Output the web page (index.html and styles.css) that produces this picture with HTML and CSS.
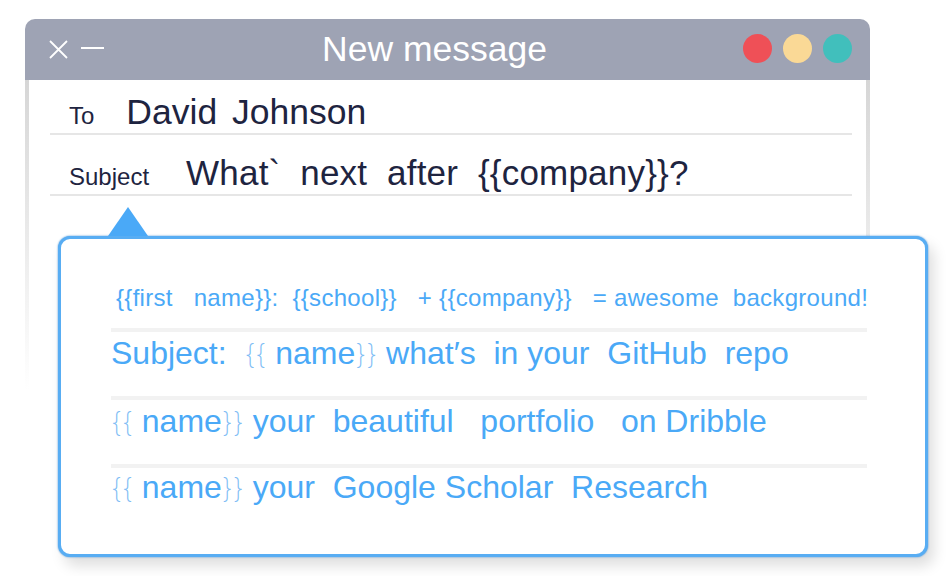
FILE: index.html
```html
<!DOCTYPE html>
<html lang="en">
<head>
    <meta charset="UTF-8">
    <meta name="viewport" content="width=device-width, initial-scale=1.0">
    <title>New message</title>
    <link rel="stylesheet" href="styles.css">
</head>
<body>
    <div class="mail">
        <div class="mail-head">
            <div class="win-ctrl">
                <svg class="icon-close" width="19" height="19" viewBox="0 0 19 19">
                    <path d="M1 1L18 18M18 1L1 18" stroke="#ffffff" stroke-width="1.8" fill="none"/>
                </svg>
                <span class="icon-min"></span>
            </div>
            <div class="mail-title">New message</div>
            <div class="dots">
                <span class="dot dot-red"></span>
                <span class="dot dot-yellow"></span>
                <span class="dot dot-teal"></span>
            </div>
        </div>

        <div class="mail-body">
            <div class="field field-to">
                <span class="field-label">To</span>
                <span class="field-value">David Johnson</span>
            </div>
            <div class="field field-subject">
                <span class="field-label">Subject</span>
                <span class="field-value">What`  next  after  {{company}}?</span>
            </div>

            <!-- template suggestions dropdown -->
            <div class="suggest">
                <span class="suggest-arrow"></span>
                <div class="sg-head">{{first   name}}:  {{school}}   + {{company}}   = awesome  background!</div>
                <div class="sg-item">Subject:  <span class="br">{{</span> name<span class="br">}}</span> what′s  in your  GitHub  repo</div>
                <div class="sg-item"><span class="br">{{</span> name<span class="br">}}</span> your  beautiful   portfolio   on Dribble</div>
                <div class="sg-item"><span class="br">{{</span> name<span class="br">}}</span> your  Google Scholar  Research</div>
            </div>
        </div>
    </div>
</body>
</html>
```

FILE: styles.css
```css
body {
    margin: 0;
    min-height: 576px;
    background: #ffffff;
    font-family: "Liberation Sans", Arial, sans-serif;
}

.mail {
    padding: 19px 0 0 25px;
    width: 845px;
}

.mail-head {
    height: 61px;
    background-color: #9ea3b4;
    border-radius: 10px 10px 0 0;
    display: flex;
    align-items: center;
    padding: 0 18px 0 24px;
    color: #ffffff;
}

.win-ctrl {
    display: flex;
    align-items: center;
}

.icon-close {
    display: block;
}

.icon-min {
    display: block;
    width: 23px;
    height: 2px;
    margin-left: 13px;
    margin-top: -3px;
    background-color: #ffffff;
}

.mail-title {
    flex: 1;
    margin-left: 22px;
    text-align: center;
    font-size: 35.5px;
    line-height: 35px;
}

.dots {
    display: flex;
    gap: 11px;
    margin-top: -3px;
}

.dot {
    width: 29px;
    height: 29px;
    border-radius: 50%;
}

.dot-red { background-color: #ef5057; }
.dot-yellow { background-color: #fad996; }
.dot-teal { background-color: #41bfbc; }

.mail-body {
    position: relative;
    height: 310px;
    padding: 0 18px 0 25px;
    background:
        linear-gradient(#d6d6d6, rgba(214, 214, 214, 0)) left top / 4px 100% no-repeat,
        linear-gradient(#d6d6d6, rgba(214, 214, 214, 0)) right top / 4px 100% no-repeat;
}

.field {
    display: flex;
    align-items: baseline;
    padding: 0 0 4px 19px;
    border-bottom: 2px solid #e6e6e6;
    color: #1e2440;
}

.field-label {
    font-size: 24px;
    line-height: 24px;
}

.field-value {
    white-space: pre;
}

.field-to {
    padding-top: 15px;
}

.field-to .field-value {
    margin-left: 32px;
    font-size: 35.5px;
    line-height: 34px;
    word-spacing: 5px;
}

.field-subject {
    padding-top: 20px;
}

.field-subject .field-value {
    margin-left: 37px;
    font-size: 35px;
    line-height: 35px;
    letter-spacing: 0.2px;
}

.suggest {
    position: absolute;
    left: 33px;
    top: 156px;
    width: 870px;
    height: 321px;
    box-sizing: border-box;
    padding: 47px 58px 0 50px;
    background-color: #ffffff;
    border: 3px solid #58adf3;
    border-radius: 12px;
    box-shadow: 0 0 2px #3d8fd8, 6px 9px 14px rgba(0, 0, 0, 0.13);
    color: #4aa9f7;
}

.suggest-arrow {
    position: absolute;
    left: 47px;
    top: -32px;
    width: 0;
    height: 0;
    border-left: 20px solid transparent;
    border-right: 20px solid transparent;
    border-bottom: 29px solid #4aa9f7;
}

.sg-head {
    padding: 0 0 18px 5px;
    font-size: 24px;
    line-height: 24px;
    letter-spacing: 0.3px;
    white-space: pre;
}

.sg-item {
    padding: 5px 0 25px;
    border-top: 4px solid #f2f2f2;
    font-size: 32px;
    line-height: 32px;
    white-space: pre;
}

.sg-item:last-child {
    padding-top: 3px;
}

.br {
    font-family: Inter, "DejaVu Sans", sans-serif;
    font-weight: 200;
    font-size: 27px;
    color: #80bdf5;
}
```
